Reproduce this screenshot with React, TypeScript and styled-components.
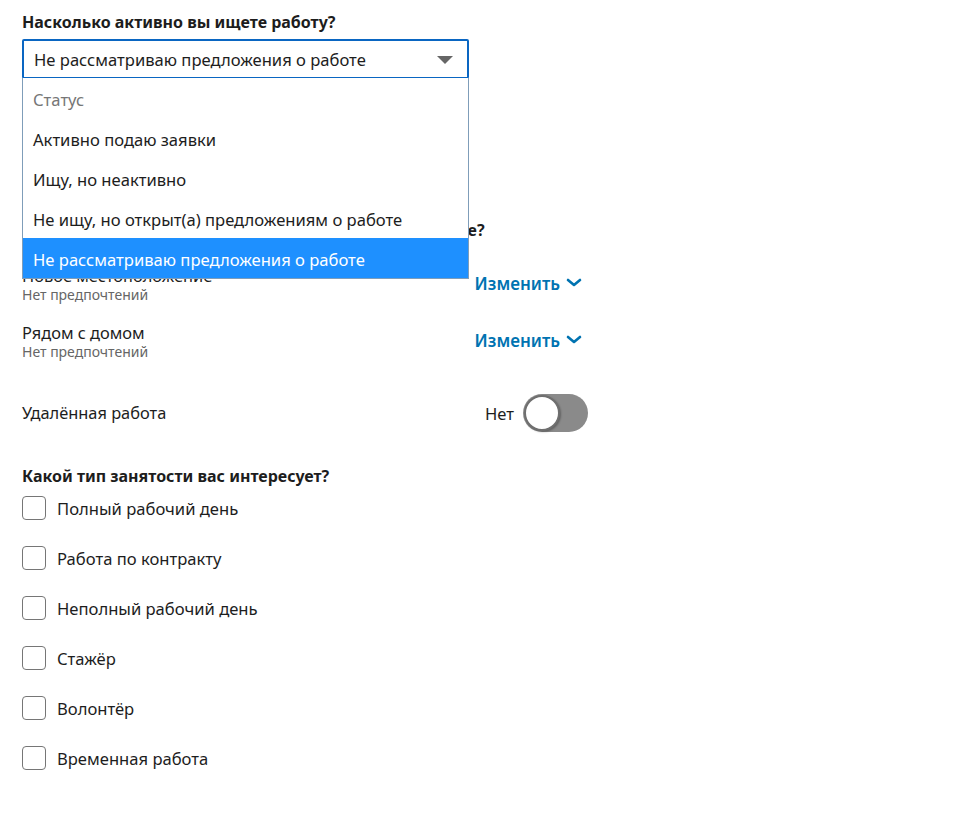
import { useState } from "react";
import styled, { createGlobalStyle } from "styled-components";

const GlobalStyle = createGlobalStyle`
  html, body {
    margin: 0;
    background: #fff;
  }
  body {
    font-family: "Noto Sans", "Open Sans", Arial, sans-serif;
    color: #1d1d1d;
  }
`;

const Page = styled.div`
  width: 566px;
  padding: 10px 0 40px 22px;
  display: flex;
  flex-direction: column;
`;

const Heading = styled.h3<{ $top?: number }>`
  margin: ${(p) => p.$top ?? 0}px 0 0;
  font-size: 16px;
  line-height: 24px;
  font-weight: 700;
  color: #1d1d1d;
`;

const SelectWrap = styled.div`
  position: relative;
  width: 447px;
  margin-top: 5px;
`;

const SelectBox = styled.div`
  height: 40px;
  box-sizing: border-box;
  border: 2px solid #0a66c2;
  border-radius: 2px;
  display: flex;
  align-items: center;
  justify-content: space-between;
  padding: 1px 14px 0 10px;
  font-size: 16.6px;
  color: #1d1d1d;
`;

const Caret = styled.span`
  width: 0;
  height: 0;
  border-left: 8px solid transparent;
  border-right: 8px solid transparent;
  border-top: 8px solid #666;
`;

const OptionList = styled.ul`
  position: absolute;
  top: 39px;
  left: 0;
  right: 0;
  margin: 0;
  padding: 0;
  list-style: none;
  background: #fff;
  border: 1px solid #7f9db9;
  border-top: none;
  z-index: 10;
`;

const Option = styled.li<{ $muted?: boolean; $active?: boolean }>`
  height: 40px;
  box-sizing: border-box;
  display: flex;
  align-items: center;
  padding: 2px 10px 0;
  font-size: 16.6px;
  color: ${(p) => (p.$active ? "#fff" : p.$muted ? "#767676" : "#1d1d1d")};
  background: ${(p) => (p.$active ? "#1e90ff" : "#fff")};
`;

const PrefRow = styled.div<{ $top: number }>`
  margin-top: ${(p) => p.$top}px;
  display: flex;
  align-items: center;
  justify-content: space-between;
`;

const PrefText = styled.div`
  display: flex;
  flex-direction: column;
`;

const PrefTitle = styled.span`
  font-size: 16.4px;
  line-height: 20px;
  color: #1d1d1d;
`;

const PrefHint = styled.span`
  font-size: 14px;
  line-height: 18px;
  color: #666;
`;

const ChangeButton = styled.button`
  border: none;
  background: none;
  padding: 0;
  display: flex;
  align-items: center;
  gap: 6px;
  font-family: inherit;
  font-size: 17px;
  font-weight: 600;
  color: #0073b1;
  cursor: pointer;
  margin: 0 6px 4px 0;
`;

const ToggleLabel = styled.div`
  display: flex;
  align-items: center;
  gap: 9px;
  font-size: 16.6px;
`;

const Track = styled.div<{ $on: boolean }>`
  width: 65px;
  height: 38px;
  border-radius: 19px;
  background: ${(p) => (p.$on ? "#0073b1" : "#8a8a8a")};
  display: flex;
  align-items: center;
  justify-content: ${(p) => (p.$on ? "flex-end" : "flex-start")};
  padding: 1px;
  box-sizing: border-box;
`;

const Knob = styled.div`
  width: 36px;
  height: 36px;
  border-radius: 50%;
  background: #fff;
  box-sizing: border-box;
  border: 2px solid #6f6f6f;
  box-shadow: 1px 1px 2px rgba(0, 0, 0, 0.3);
`;

const CheckList = styled.div`
  display: flex;
  flex-direction: column;
  gap: 26px;
  margin-top: 8px;
`;

const CheckRow = styled.label`
  display: flex;
  align-items: center;
  gap: 11px;
  height: 24px;
  font-size: 16.6px;
  color: #1d1d1d;
`;

const Box = styled.span`
  width: 24px;
  height: 24px;
  box-sizing: border-box;
  border: 1px solid #767676;
  border-radius: 4px;
  background: #fff;
`;

const Chevron = () => (
  <svg width="16" height="10" viewBox="0 0 16 10">
    <path d="M2 2l6 5 6-5" fill="none" stroke="#0073b1" strokeWidth="2.6" strokeLinecap="round" strokeLinejoin="round" />
  </svg>
);

const statuses = [
  "Активно подаю заявки",
  "Ищу, но неактивно",
  "Не ищу, но открыт(а) предложениям о работе",
  "Не рассматриваю предложения о работе",
];

const jobTypes = [
  "Полный рабочий день",
  "Работа по контракту",
  "Неполный рабочий день",
  "Стажёр",
  "Волонтёр",
  "Временная работа",
];

export default function App() {
  const [status] = useState(statuses[3]);
  const [remote] = useState(false);

  return (
    <Page>
      <GlobalStyle />
      <Heading>Насколько активно вы ищете работу?</Heading>
      <SelectWrap>
        <SelectBox>
          {status}
          <Caret />
        </SelectBox>
        <OptionList>
          <Option $muted>Статус</Option>
          {statuses.map((s) => (
            <Option key={s} $active={s === status}>
              {s}
            </Option>
          ))}
        </OptionList>
      </SelectWrap>

      <Heading $top={139}>Где бы вы хотели работать и какой вид предпочитаете?</Heading>
      <PrefRow $top={24}>
        <PrefText>
          <PrefTitle>Новое местоположение</PrefTitle>
          <PrefHint>Нет предпочтений</PrefHint>
        </PrefText>
        <ChangeButton>
          Изменить <Chevron />
        </ChangeButton>
      </PrefRow>
      <PrefRow $top={19}>
        <PrefText>
          <PrefTitle>Рядом с домом</PrefTitle>
          <PrefHint>Нет предпочтений</PrefHint>
        </PrefText>
        <ChangeButton>
          Изменить <Chevron />
        </ChangeButton>
      </PrefRow>
      <PrefRow $top={33}>
        <PrefTitle>Удалённая работа</PrefTitle>
        <ToggleLabel>
          Нет
          <Track $on={remote}>
            <Knob />
          </Track>
        </ToggleLabel>
      </PrefRow>

      <Heading $top={32}>Какой тип занятости вас интересует?</Heading>
      <CheckList>
        {jobTypes.map((t) => (
          <CheckRow key={t}>
            <Box />
            {t}
          </CheckRow>
        ))}
      </CheckList>
    </Page>
  );
}
